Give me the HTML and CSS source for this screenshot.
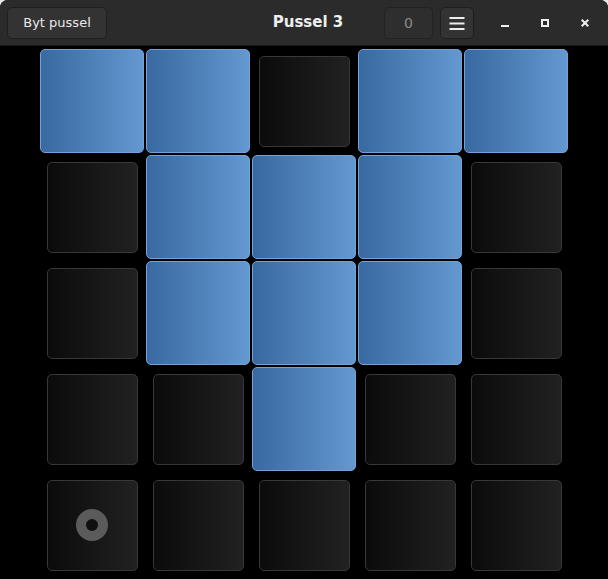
FILE: index.html
```html
<!DOCTYPE html>
<html lang="sv">
<head>
<meta charset="utf-8">
<title>Pussel 3</title>
<link rel="stylesheet" href="styles.css">
</head>
<body>
<div class="window">
  <header class="headerbar">
    <div class="hb-start">
      <button class="btn btn-text">Byt pussel</button>
    </div>
    <div class="hb-title">Pussel 3</div>
    <div class="hb-end">
      <button class="btn btn-counter" disabled>0</button>
      <button class="btn btn-menu" aria-label="Meny">
        <svg width="16" height="16" viewBox="0 0 16 16"><rect x="0.5" y="2" width="15" height="2" fill="#eeeeee"/><rect x="0.5" y="7.5" width="15" height="2" fill="#eeeeee"/><rect x="0.5" y="13" width="15" height="2" fill="#eeeeee"/></svg>
      </button>
      <div class="controls">
        <button class="ctl" aria-label="Minimera">
          <svg width="16" height="16" viewBox="0 0 16 16"><rect x="4" y="10" width="8" height="2" fill="#eeeeee"/></svg>
        </button>
        <button class="ctl" aria-label="Maximera">
          <svg width="16" height="16" viewBox="0 0 16 16"><rect x="5" y="5" width="6" height="6" fill="none" stroke="#eeeeee" stroke-width="2"/></svg>
        </button>
        <button class="ctl" aria-label="Stäng">
          <svg width="16" height="16" viewBox="0 0 16 16"><path d="M4.7 4.7 L11.3 11.3 M11.3 4.7 L4.7 11.3" stroke="#eeeeee" stroke-width="2" fill="none"/></svg>
        </button>
      </div>
    </div>
  </header>
  <main class="board">
    <div class="grid">
      <div class="slot"><div class="cell on"></div></div>
      <div class="slot"><div class="cell on"></div></div>
      <div class="slot"><div class="cell off"></div></div>
      <div class="slot"><div class="cell on"></div></div>
      <div class="slot"><div class="cell on"></div></div>

      <div class="slot"><div class="cell off"></div></div>
      <div class="slot"><div class="cell on"></div></div>
      <div class="slot"><div class="cell on"></div></div>
      <div class="slot"><div class="cell on"></div></div>
      <div class="slot"><div class="cell off"></div></div>

      <div class="slot"><div class="cell off"></div></div>
      <div class="slot"><div class="cell on"></div></div>
      <div class="slot"><div class="cell on"></div></div>
      <div class="slot"><div class="cell on"></div></div>
      <div class="slot"><div class="cell off"></div></div>

      <div class="slot"><div class="cell off"></div></div>
      <div class="slot"><div class="cell off"></div></div>
      <div class="slot"><div class="cell on"></div></div>
      <div class="slot"><div class="cell off"></div></div>
      <div class="slot"><div class="cell off"></div></div>

      <div class="slot"><div class="cell off"><span class="ring"></span></div></div>
      <div class="slot"><div class="cell off"></div></div>
      <div class="slot"><div class="cell off"></div></div>
      <div class="slot"><div class="cell off"></div></div>
      <div class="slot"><div class="cell off"></div></div>
    </div>
  </main>
</div>
</body>
</html>
```

FILE: styles.css
```css
html, body {
  margin: 0;
  padding: 0;
  height: 100%;
  background: #e6e6e6;
}

body {
  font-family: "DejaVu Sans", "Liberation Sans", sans-serif;
}

.window {
  height: 100%;
  display: flex;
  flex-direction: column;
  background: #000;
  border-radius: 8px 8px 0 0;
  overflow: hidden;
}

.headerbar {
  height: 45px;
  flex: 0 0 45px;
  background: #2b2b2b;
  border-bottom: 1px solid #1a1a1a;
  display: grid;
  grid-template-columns: 1fr auto 1fr;
  align-items: center;
}

.hb-start {
  display: flex;
  align-items: center;
  padding-left: 7px;
}

.hb-title {
  color: #eeeeee;
  font-weight: bold;
  font-size: 15px;
  line-height: 18px;
  padding-bottom: 1px;
  padding-left: 8px;
}

.hb-end {
  display: flex;
  align-items: center;
  justify-content: flex-end;
  padding-right: 11px;
}

.btn {
  height: 32px;
  box-sizing: border-box;
  border: 1px solid #1f1f1f;
  border-radius: 5px;
  background: #333333;
  color: #e8e8e8;
  font-family: "DejaVu Sans", "Liberation Sans", sans-serif;
  font-size: 13px;
  padding: 0;
  display: flex;
  align-items: center;
  justify-content: center;
  margin: 0;
}

.btn-text {
  width: 100px;
}

.btn-counter {
  width: 49px;
  background: #2e2e2e;
  border-color: #232323;
  color: #8a8a8a;
  font-size: 14px;
}

.btn-menu {
  width: 34px;
  margin-left: 7px;
}

.controls {
  display: flex;
  gap: 16px;
  margin-left: 19px;
}

.ctl {
  width: 24px;
  height: 24px;
  padding: 0;
  margin: 0;
  border: none;
  background: transparent;
  display: flex;
  align-items: center;
  justify-content: center;
}

.board {
  flex: 1;
  display: flex;
  justify-content: center;
  padding-top: 2px;
}

.grid {
  display: grid;
  grid-template-columns: repeat(5, 106px);
  grid-template-rows: repeat(5, 106px);
}

.slot {
  display: flex;
  align-items: center;
  justify-content: center;
}

.cell {
  box-sizing: border-box;
  border-radius: 5px;
  display: flex;
  align-items: center;
  justify-content: center;
}

.cell.on {
  width: 104px;
  height: 104px;
  background: linear-gradient(to right, #3869a0, #6498d0);
  border: 1px solid #74a3d8;
}

.cell.off {
  width: 91px;
  height: 91px;
  background: linear-gradient(to right, #0b0b0b, #212121);
  border: 1px solid #383838;
}

.ring {
  width: 32px;
  height: 32px;
  box-sizing: border-box;
  border-radius: 50%;
  border: 10px solid #5b5b5b;
  background: #101010;
}
```
